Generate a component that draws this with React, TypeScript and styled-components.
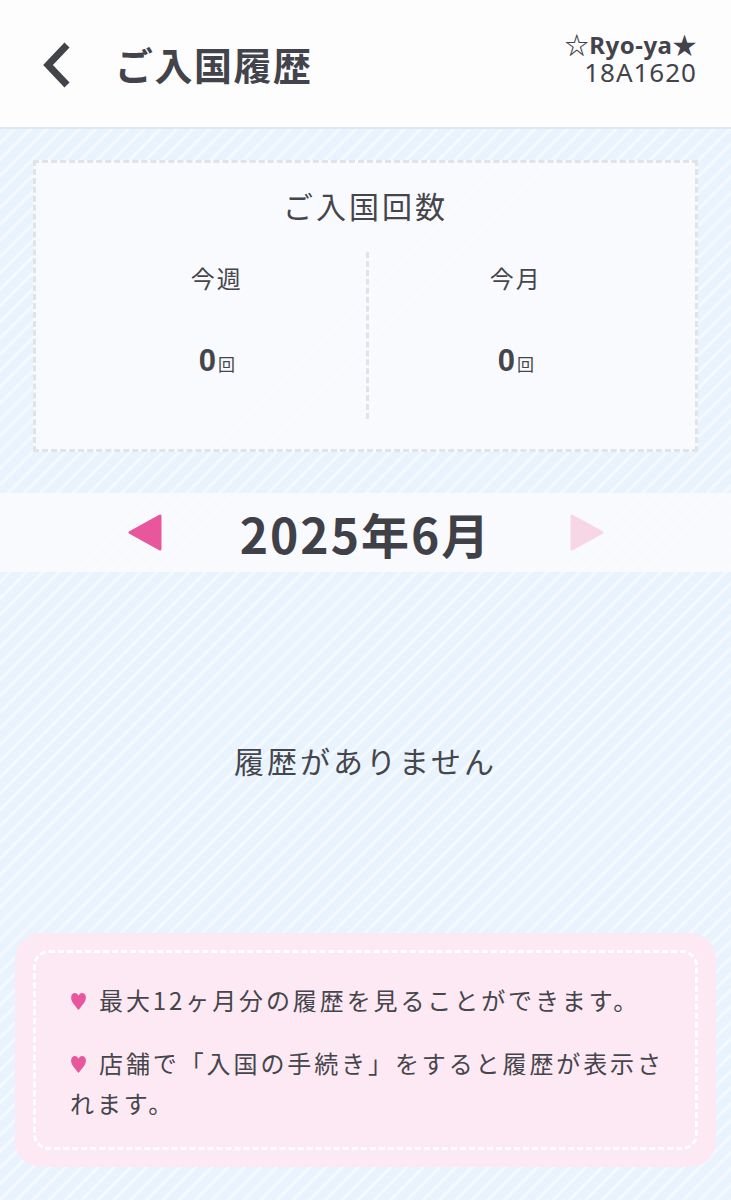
import styled, { createGlobalStyle } from 'styled-components';

const GlobalStyle = createGlobalStyle`
  html, body {
    margin: 0;
    padding: 0;
  }
  body {
    font-family: "Noto Sans CJK JP", "Noto Sans", sans-serif;
    color: #414149;
  }
`;

function App() {
  // History screen: header, visit counts, month switcher, empty state, notes
  return (
    <Page>
      <GlobalStyle />
      <Header>
        <BackButton aria-label="back">
          <svg width="34" height="48" viewBox="0 0 34 48">
            <path d="M27 4 L8 24 L27 44" fill="none" stroke="#43434b" strokeWidth="7" strokeLinejoin="miter" />
          </svg>
        </BackButton>
        <Title>ご入国履歴</Title>
        <UserBlock>
          <UserName>☆Ryo-ya★</UserName>
          <UserId>18A1620</UserId>
        </UserBlock>
      </Header>

      <CountCard>
        <CardTitle>ご入国回数</CardTitle>
        <CountColumns>
          <CountColumn>
            <CountLabel>今週</CountLabel>
            <CountValue>0<CountUnit>回</CountUnit></CountValue>
          </CountColumn>
          <CountColumn $divider>
            <CountLabel>今月</CountLabel>
            <CountValue>0<CountUnit>回</CountUnit></CountValue>
          </CountColumn>
        </CountColumns>
      </CountCard>

      <MonthBar>
        <Arrow $dir="left" $active />
        <MonthText>2025年6月</MonthText>
        <Arrow $dir="right" />
      </MonthBar>

      <EmptyArea>
        <EmptyText>履歴がありません</EmptyText>
      </EmptyArea>

      <NoteBox>
        <NoteInner>
          <Note>
            <Heart />最大12ヶ月分の履歴を見ることができます。
          </Note>
          <Note>
            <Heart />店舗で「入国の手続き」をすると履歴が表示されます。
          </Note>
        </NoteInner>
      </NoteBox>
    </Page>
  );
}

function Arrow({ $dir, $active }: { $dir: 'left' | 'right'; $active?: boolean }) {
  const points = $dir === 'left' ? '34,3 34,36 4,19.5' : '3,3 3,36 33,19.5';
  return (
    <ArrowButton>
      <svg width="37" height="39" viewBox="0 0 37 39">
        <polygon
          points={points}
          fill={$active ? '#e8579b' : '#f7d6e5'}
          stroke={$active ? '#e8579b' : '#f7d6e5'}
          strokeWidth="3"
          strokeLinejoin="round"
        />
      </svg>
    </ArrowButton>
  );
}

function Heart() {
  return (
    <HeartIcon viewBox="0 0 16 18" width="17" height="19">
      <path d="M8 17 C3.5 11.5 1 9 1 5.2 C1 2.6 2.7 1 4.6 1 C6.2 1 7.4 2.1 8 3.6 C8.6 2.1 9.8 1 11.4 1 C13.3 1 15 2.6 15 5.2 C15 9 12.5 11.5 8 17 Z" fill="#e8579b" />
    </HeartIcon>
  );
}

// Styled components

const Page = styled.div`
  min-height: 1200px;
  background-color: #e8f3fd;
  background-image: repeating-linear-gradient(
    135deg,
    #e8f3fd 0px,
    #e8f3fd 7px,
    #f3f9fe 8.5px,
    #f3f9fe 10px,
    #e8f3fd 11.5px
  );
  overflow: hidden;
`;

const Header = styled.header`
  display: flex;
  align-items: center;
  height: 129px;
  padding: 0 34px 0 40px;
  box-sizing: border-box;
  background: #fdfdfd;
  border-bottom: 2px solid #dfe7f0;
`;

const BackButton = styled.div`
  display: flex;
  align-items: center;
  width: 34px;
  height: 48px;
  margin-top: 2px;
`;

const Title = styled.h1`
  flex: 1;
  margin: 0 0 0 41px;
  font-size: 38px;
  font-weight: 700;
  letter-spacing: 1.5px;
  color: #43434b;
  line-height: 1;
`;

const UserBlock = styled.div`
  display: flex;
  flex-direction: column;
  align-items: flex-end;
  gap: 1px;
  margin-top: -10px;
`;

const UserName = styled.div`
  font-family: "Noto Sans", "Noto Sans CJK JP", sans-serif;
  font-size: 24px;
  font-weight: 700;
  line-height: 26px;
  letter-spacing: 0.5px;
  color: #43434b;
`;

const UserId = styled.div`
  font-family: "Noto Sans", "Noto Sans CJK JP", sans-serif;
  font-size: 26px;
  line-height: 26px;
  color: #43434b;
  letter-spacing: 1px;
`;

const CountCard = styled.section`
  margin: 31px 33px 0;
  padding: 20px 0 33px;
  background: rgba(250, 251, 254, 0.88);
  border: 3px dashed #e1e3ea;
  box-sizing: border-box;
  height: 292px;
`;

const CardTitle = styled.div`
  text-align: center;
  font-size: 30px;
  line-height: 44px;
  letter-spacing: 3px;
  color: #45454c;
`;

const CountColumns = styled.div`
  display: grid;
  grid-template-columns: 1fr 1fr;
  margin-top: 25px;
  padding: 0 32px;
`;

const CountColumn = styled.div<{ $divider?: boolean }>`
  display: flex;
  flex-direction: column;
  align-items: center;
  height: 167px;
  padding-top: 6px;
  box-sizing: border-box;
  border-left: ${(p) => (p.$divider ? '3px dashed #e1e3ea' : 'none')};
`;

const CountLabel = styled.div`
  font-size: 24px;
  line-height: 40px;
  letter-spacing: 2px;
  color: #45454c;
`;

const CountValue = styled.div`
  margin-top: 41px;
  font-family: "Liberation Sans", "Noto Sans", sans-serif;
  font-size: 31px;
  font-weight: 700;
  line-height: 44px;
  color: #45454c;
`;

const CountUnit = styled.span`
  font-family: "Noto Sans CJK JP", sans-serif;
  font-size: 17px;
  font-weight: 400;
  margin-left: 2px;
`;

const MonthBar = styled.div`
  display: grid;
  grid-template-columns: 37px 406px 37px;
  justify-content: center;
  align-items: center;
  height: 79px;
  margin-top: 41px;
  background: rgba(250, 251, 254, 0.9);
`;

const ArrowButton = styled.div`
  display: flex;
  width: 37px;
  height: 39px;
`;

const MonthText = styled.div`
  text-align: center;
  font-size: 48px;
  font-weight: 700;
  letter-spacing: 2px;
  line-height: 1;
  color: #404048;
`;

const EmptyArea = styled.div`
  height: 361px;
  padding-top: 168px;
  box-sizing: border-box;
  text-align: center;
`;

const EmptyText = styled.div`
  font-size: 30px;
  line-height: 40px;
  letter-spacing: 3px;
  color: #45454c;
`;

const NoteBox = styled.section`
  margin: 0 15px;
  padding: 17px 18px;
  background: rgba(253, 232, 243, 0.97);
  border-radius: 26px;
`;

const NoteInner = styled.div`
  display: flex;
  flex-direction: column;
  gap: 23px;
  padding: 27px 18px 24px 34px;
  border: 3px dashed #ffffff;
  border-radius: 16px;
  min-height: 200px;
  box-sizing: border-box;
`;

const Note = styled.p`
  margin: 0;
  font-size: 24px;
  line-height: 40px;
  letter-spacing: 2.9px;
  color: #45454c;
`;

const HeartIcon = styled.svg`
  margin-right: 12px;
  vertical-align: -1px;
`;

export default App;
